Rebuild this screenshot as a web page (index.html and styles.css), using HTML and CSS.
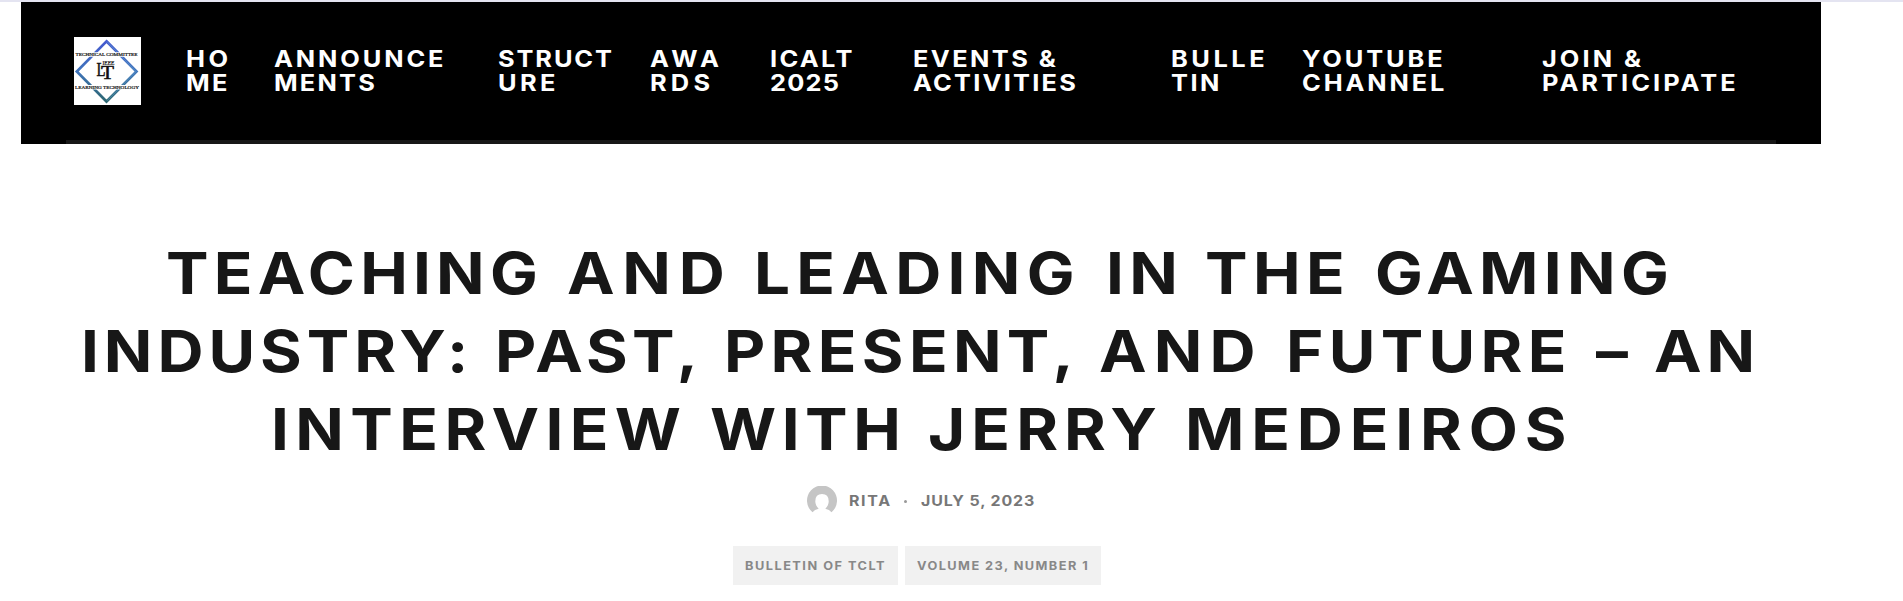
FILE: index.html
```
<!DOCTYPE html>
<html lang="en">
<head>
<meta charset="utf-8">
<title>Teaching and Leading in the Gaming Industry</title>
<link rel="stylesheet" href="styles.css">
</head>
<body>
<div class="page">
  <header class="header">
    <div class="bar">
      <a class="logo">
        <svg width="67" height="68" viewBox="0 0 67 68">
          <defs>
            <linearGradient id="edge" x1="0" y1="0" x2="0" y2="1">
              <stop offset="0" stop-color="#4459cf"/>
              <stop offset=".5" stop-color="#3f74ba"/>
              <stop offset="1" stop-color="#2c6670"/>
            </linearGradient>
          </defs>
          <rect width="67" height="68" fill="#fff"/>
          <path d="M32.500 4.300 62.500 34.500 32.500 64.500 2.800 34.500Z" fill="none" stroke="url(#edge)" stroke-width="2.700"/>
          <path d="M33 4.600 62 34.500 33 63.800" fill="none" stroke="#6db4d8" stroke-width=".7" opacity=".7"/>
          <path d="M1 15.200h64v4.600H1zM1 48h64v4.600H1z" fill="#fff"/>
          <g class="logo-text" fill="#111">
            <text class="logo-ring" x="1.500" y="19.300" font-size="4.800" textLength="62" lengthAdjust="spacingAndGlyphs">TECHNICAL COMMITTEE</text>
            <text class="logo-ring" x="1" y="52" font-size="4.800" textLength="64" lengthAdjust="spacingAndGlyphs">LEARNING TECHNOLOGY</text>
            <text class="logo-ring" x="28.500" y="28.300" font-size="5.400" textLength="12" lengthAdjust="spacingAndGlyphs">IEEE</text>
            <text x="22.500" y="38.700" font-size="19" textLength="9" lengthAdjust="spacingAndGlyphs" stroke="#111" stroke-width=".5">L</text>
            <text x="27" y="42.300" font-size="19" textLength="13" lengthAdjust="spacingAndGlyphs" stroke="#111" stroke-width=".5">T</text>
          </g>
        </svg>
      </a>
      <nav class="nav">
        <a class="home"><span>HO</span><span>ME</span></a>
        <a class="announcements"><span>ANNOUNCE</span><span>MENTS</span></a>
        <a class="structure"><span>STRUCT</span><span>URE</span></a>
        <a class="awards"><span>AWA</span><span>RDS</span></a>
        <a class="icalt"><span>ICALT</span><span>2025</span></a>
        <a class="events"><span>EVENTS &amp;</span><span>ACTIVITIES</span></a>
        <a class="bulletin"><span>BULLE</span><span>TIN</span></a>
        <a class="youtube"><span>YOUTUBE</span><span>CHANNEL</span></a>
        <a class="join"><span>JOIN &amp;</span><span>PARTICIPATE</span></a>
      </nav>
    </div>
  </header>
  <main>
    <h1 class="title">
      <span class="line line-1"><span>TEACHING</span> <span>AND</span> <span>LEADING</span> <span>IN</span> <span>THE</span> <span>GAMING</span></span>
      <span class="line line-2"><span>INDUSTRY:</span> <span>PAST,</span> <span>PRESENT,</span> <span>AND</span> <span>FUTURE</span> <span>–</span> <span>AN</span></span>
      <span class="line line-3"><span>INTERVIEW</span> <span>WITH</span> <span>JERRY</span> <span>MEDEIROS</span></span>
    </h1>
    <div class="meta">
      <svg class="avatar" width="30" height="30" viewBox="0 0 30 30">
        <path d="M5.500 26.200A15 15 0 1 1 24.500 26.200Q22.500 23.600 18.300 22.700Q21.700 19.500 21.700 15.200Q21.700 8 15 8Q8.300 8 8.300 15.200Q8.300 19.500 11.700 22.700Q7.500 23.600 5.500 26.200Z" fill="#c5c5c5"/>
      </svg>
      <span class="author">RITA</span>
      <span class="dot"></span>
      <span class="date">JULY 5, 2023</span>
    </div>
    <div class="tags">
      <a class="tag tag-bulletin"><span>BULLETIN OF TCLT</span></a>
      <a class="tag tag-volume"><span>VOLUME 23, NUMBER 1</span></a>
    </div>
  </main>
</div>
</body>
</html>
```
FILE: styles.css
```
* { box-sizing: border-box; }
body {
  margin: 0;
  height: 601px;
  overflow: hidden;
  background: #fff;
  border-top: 2px solid #e4e4f1;
  font-family: Inter, "Open Sans", sans-serif;
  font-weight: 700;
}
.page { width: 1800px; margin-left: 21px; }

/* Wide lettering for all headings and labels */
.nav span, .line > span, .author, .date, .tag span {
  transform: scaleX(1.1);
  transform-origin: 0 50%;
}

.header { height: 142px; padding: 0 45px; background: #000; }
.bar {
  display: flex;
  height: 142px;
  padding: 35px 0 0 8px;
  border-bottom: 4px solid #171717;
}
.logo { width: 67px; height: 68px; margin-right: 45px; }
.logo svg { display: block; }
.logo-text { font-family: "Liberation Serif", serif; font-weight: 400; }
.logo-ring { stroke: #111; stroke-width: .2px; }

.nav { display: flex; padding-top: 10px; color: #fff; font-size: 23.1px; line-height: 24px; }
.nav a { flex: none; white-space: nowrap; }
.nav span { display: block; width: max-content; }
.home { width: 88px; letter-spacing: 3.2px; }
.home span + span { letter-spacing: 2.2px; }
.announcements { width: 223.5px; letter-spacing: 2.6px; }
.announcements span + span { letter-spacing: 2px; }
.structure { width: 152px; letter-spacing: 1.7px; }
.structure span + span { letter-spacing: 3px; }
.awards { width: 120px; letter-spacing: 3.8px; }
.icalt { width: 143px; letter-spacing: 2.1px; }
.icalt span + span { letter-spacing: 1.1px; }
.events { width: 258.5px; letter-spacing: 2.2px; }
.events span + span { letter-spacing: 2px; }
.bulletin { width: 130.5px; letter-spacing: 3.2px; }
.bulletin span + span { letter-spacing: 2.2px; }
.youtube { width: 240px; letter-spacing: 2.6px; }
.join { letter-spacing: 2.75px; }

.title { margin: 90px 0 0; color: #171717; font-size: 58px; font-weight: 700; line-height: 78px; }
.line { display: flex; white-space: nowrap; }
.line span { flex: none; }
.line-1 { padding-left: 145px; }
.line-1 :nth-child(1) { width: 400.5px; letter-spacing: 4.7px; }
.line-1 :nth-child(2) { width: 187.5px; letter-spacing: 7px; }
.line-1 :nth-child(3) { width: 351.5px; letter-spacing: 5.7px; }
.line-1 :nth-child(4) { width: 99.5px; letter-spacing: 4.8px; }
.line-1 :nth-child(5) { width: 170px; letter-spacing: 4.9px; }
.line-1 :nth-child(6) { width: 300px; letter-spacing: 4.8px; }
.line-2 { padding-left: 60.2px; }
.line-2 :nth-child(1) { width: 414px; letter-spacing: 4.5px; }
.line-2 :nth-child(2) { width: 229px; letter-spacing: 3.8px; }
.line-2 :nth-child(3) { width: 374.5px; letter-spacing: 4.8px; }
.line-2 :nth-child(4) { width: 187.5px; letter-spacing: 6.5px; }
.line-2 :nth-child(5) { width: 309.5px; letter-spacing: 4.8px; }
.line-2 :nth-child(6) { width: 58px; }
.line-2 :nth-child(7) { letter-spacing: 4.5px; }
.line-3 { padding-left: 249.7px; }
.line-3 :nth-child(1) { width: 439px; letter-spacing: 5.8px; }
.line-3 :nth-child(2) { width: 218.5px; letter-spacing: 5px; }
.line-3 :nth-child(3) { width: 257px; letter-spacing: 5.5px; }
.line-3 :nth-child(4) { letter-spacing: 6.2px; }

.meta {
  display: flex;
  align-items: center;
  height: 30px;
  margin-top: 18px;
  padding-left: 786px;
  color: #777;
  font-size: 14.5px;
  line-height: 30px;
}
.author { width: 55px; margin-left: 11.5px; letter-spacing: 1.5px; }
.dot { width: 3px; height: 3px; margin: 1px 14px 0 0; border-radius: 50%; background: #999; }
.date { letter-spacing: .8px; white-space: nowrap; }

.tags { display: flex; gap: 7px; margin-top: 30px; padding-left: 712px; }
.tag {
  height: 39px;
  padding: 1px 0 0 12px;
  background: #f1f1f1;
  color: #888;
  font-size: 11.6px;
  line-height: 39px;
  white-space: nowrap;
}
.tag span { display: block; width: max-content; }
.tag-bulletin { width: 165px; letter-spacing: 1.35px; }
.tag-volume { width: 196px; letter-spacing: 1.3px; }
```
